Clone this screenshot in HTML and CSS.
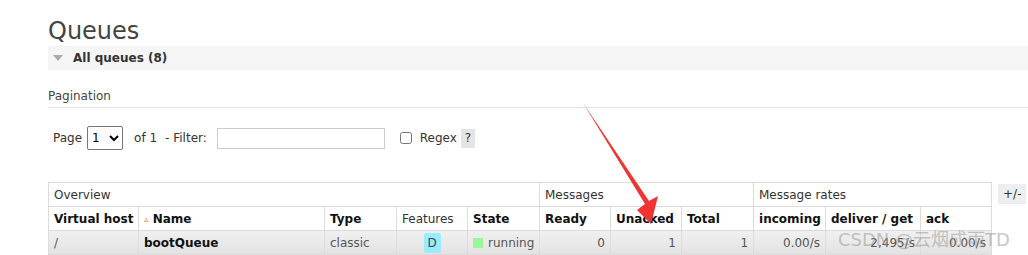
FILE: index.html
```html
<!DOCTYPE html>
<html lang="en">
<head>
    <meta charset="UTF-8">
    <title>Queues</title>
    <link rel="stylesheet" href="styles.css">
</head>
<body>

<div class="main">
    <h1>Queues</h1>
    <div class="section-bar">
        <span class="toggle"></span>
        <h2>All queues (8)</h2>
    </div>

    <h3 class="pager-title">Pagination</h3>
    <div class="pager">
        <label>Page</label>
        <select class="page-select"><option>1</option></select>
        <span class="of">of 1</span>
        <label>- Filter:</label>
        <input type="text" class="filter">
        <input type="checkbox" class="regex-box">
        <label>Regex</label>
        <span class="help">?</span>
    </div>

    <div class="table-wrap">
        <table class="queues">
            <colgroup>
                <col style="width:90px"><col style="width:186px"><col style="width:72px">
                <col style="width:71px"><col style="width:72px"><col style="width:71px">
                <col style="width:71px"><col style="width:72px"><col style="width:72px">
                <col style="width:95px"><col style="width:71px">
            </colgroup>
            <thead>
                <tr class="group-row">
                    <th colspan="5">Overview</th>
                    <th colspan="3">Messages</th>
                    <th colspan="3">Message rates</th>
                </tr>
                <tr class="head-row">
                    <th>Virtual host</th>
                    <th><span class="sort">&#9653;</span> Name</th>
                    <th>Type</th>
                    <th class="plain">Features</th>
                    <th>State</th>
                    <th>Ready</th>
                    <th>Unacked</th>
                    <th>Total</th>
                    <th>incoming</th>
                    <th>deliver / get</th>
                    <th>ack</th>
                </tr>
            </thead>
            <tbody>
                <tr>
                    <td class="muted">/</td>
                    <td class="name">bootQueue</td>
                    <td class="muted">classic</td>
                    <td class="center"><span class="badge">D</span></td>
                    <td class="muted"><span class="state-dot"></span>running</td>
                    <td class="num">0</td>
                    <td class="num">1</td>
                    <td class="num">1</td>
                    <td class="num">0.00/s</td>
                    <td class="num">2,495/s</td>
                    <td class="num">0.00/s</td>
                </tr>
            </tbody>
        </table>
        <span class="columns-btn">+/-</span>
    </div>
</div>

<!-- screenshot annotation -->
<svg class="arrow" width="1028" height="255" viewBox="0 0 1028 255">
    <polygon points="583,103 649,201 658,196 651,224 637,210 645,204" fill="#f03434"/>
</svg>
<div class="watermark">CSDN @云烟成雨TD</div>

</body>
</html>
```

FILE: styles.css
```css
body {
    margin: 0;
    padding: 0;
    font-family: "DejaVu Sans", Verdana, sans-serif;
    font-size: 12px;
    color: #484848;
    background: #fff;
    position: relative;
    height: 255px;
    overflow: hidden;
}
.main {
    padding-left: 48px;
}
h1 {
    font-size: 24px;
    font-weight: normal;
    color: #444;
    margin: 0;
    padding-top: 16px;
    line-height: 30px;
}
.section-bar {
    background: #f5f5f5;
    height: 24px;
    display: flex;
    align-items: center;
}
.toggle {
    width: 0;
    height: 0;
    border-left: 5px solid transparent;
    border-right: 5px solid transparent;
    border-top: 6px solid #aaa;
    margin-left: 5px;
    margin-right: 10px;
}
.section-bar h2 {
    font-size: 12px;
    font-weight: bold;
    color: #333;
    margin: 0;
}
.pager-title {
    font-size: 12px;
    font-weight: normal;
    color: #444;
    margin: 19px 0 0;
    padding-bottom: 3px;
    border-bottom: 1px solid #e4e4e4;
    line-height: 15px;
}
.pager {
    display: flex;
    align-items: center;
    height: 24px;
    margin-top: 18px;
    padding-left: 5px;
    color: #333;
}
.page-select {
    width: 36px;
    height: 24px;
    margin-left: 5px;
    margin-right: 11px;
    font-family: "DejaVu Sans", sans-serif;
    font-size: 12px;
    border: 1px solid #777;
    border-radius: 2px;
    background: #fff;
}
.of {
    margin-right: 8px;
}
.filter {
    width: 166px;
    height: 19px;
    margin: 0 0 0 10px;
    padding: 0;
    border: 1px solid #ccc;
}
.regex-box {
    width: 12px;
    height: 12px;
    margin: 0 8px 0 15px;
}
.help {
    background: #e4e4e4;
    padding: 3px 4px;
    margin-left: 4px;
    line-height: 13px;
}
.table-wrap {
    display: flex;
    align-items: flex-start;
    margin-top: 32px;
}
table.queues {
    border-collapse: collapse;
    table-layout: fixed;
    width: 943px;
}
.queues th, .queues td {
    border: 1px solid #dcdcdc;
    height: 23px;
    padding: 0 5px;
    text-align: left;
    white-space: nowrap;
    overflow: hidden;
}
.group-row th {
    font-weight: normal;
    color: #333;
}
.head-row th {
    font-weight: bold;
    color: #111;
}
.head-row th.plain {
    font-weight: normal;
    color: #333;
}
.sort {
    color: #f07030;
    font-size: 9px;
    vertical-align: 1px;
}
tbody tr {
    background: linear-gradient(#f0f0f0, #e2e2e2);
}
.queues td {
    color: #555;
}
.queues td.name {
    font-weight: bold;
    color: #111;
}
.queues td.center {
    text-align: center;
}
.queues td.num {
    text-align: right;
}
.badge {
    display: inline-block;
    background: #99ebff;
    color: #445;
    border-radius: 3px;
    width: 17px;
    line-height: 20px;
    text-align: center;
}
.state-dot {
    display: inline-block;
    width: 10px;
    height: 10px;
    background: #98f898;
    margin-right: 5px;
    vertical-align: -1px;
}
.columns-btn {
    background: #eee;
    color: #333;
    margin-left: 6px;
    margin-top: 2px;
    padding: 3px 5px;
    line-height: 14px;
}
.arrow {
    position: absolute;
    left: 0;
    top: 0;
    pointer-events: none;
}
.watermark {
    position: absolute;
    left: 838px;
    top: 225px;
    font-family: "DejaVu Sans", "Noto Sans CJK SC", sans-serif;
    font-size: 18px;
    color: rgba(150, 150, 150, 0.55);
}
```
